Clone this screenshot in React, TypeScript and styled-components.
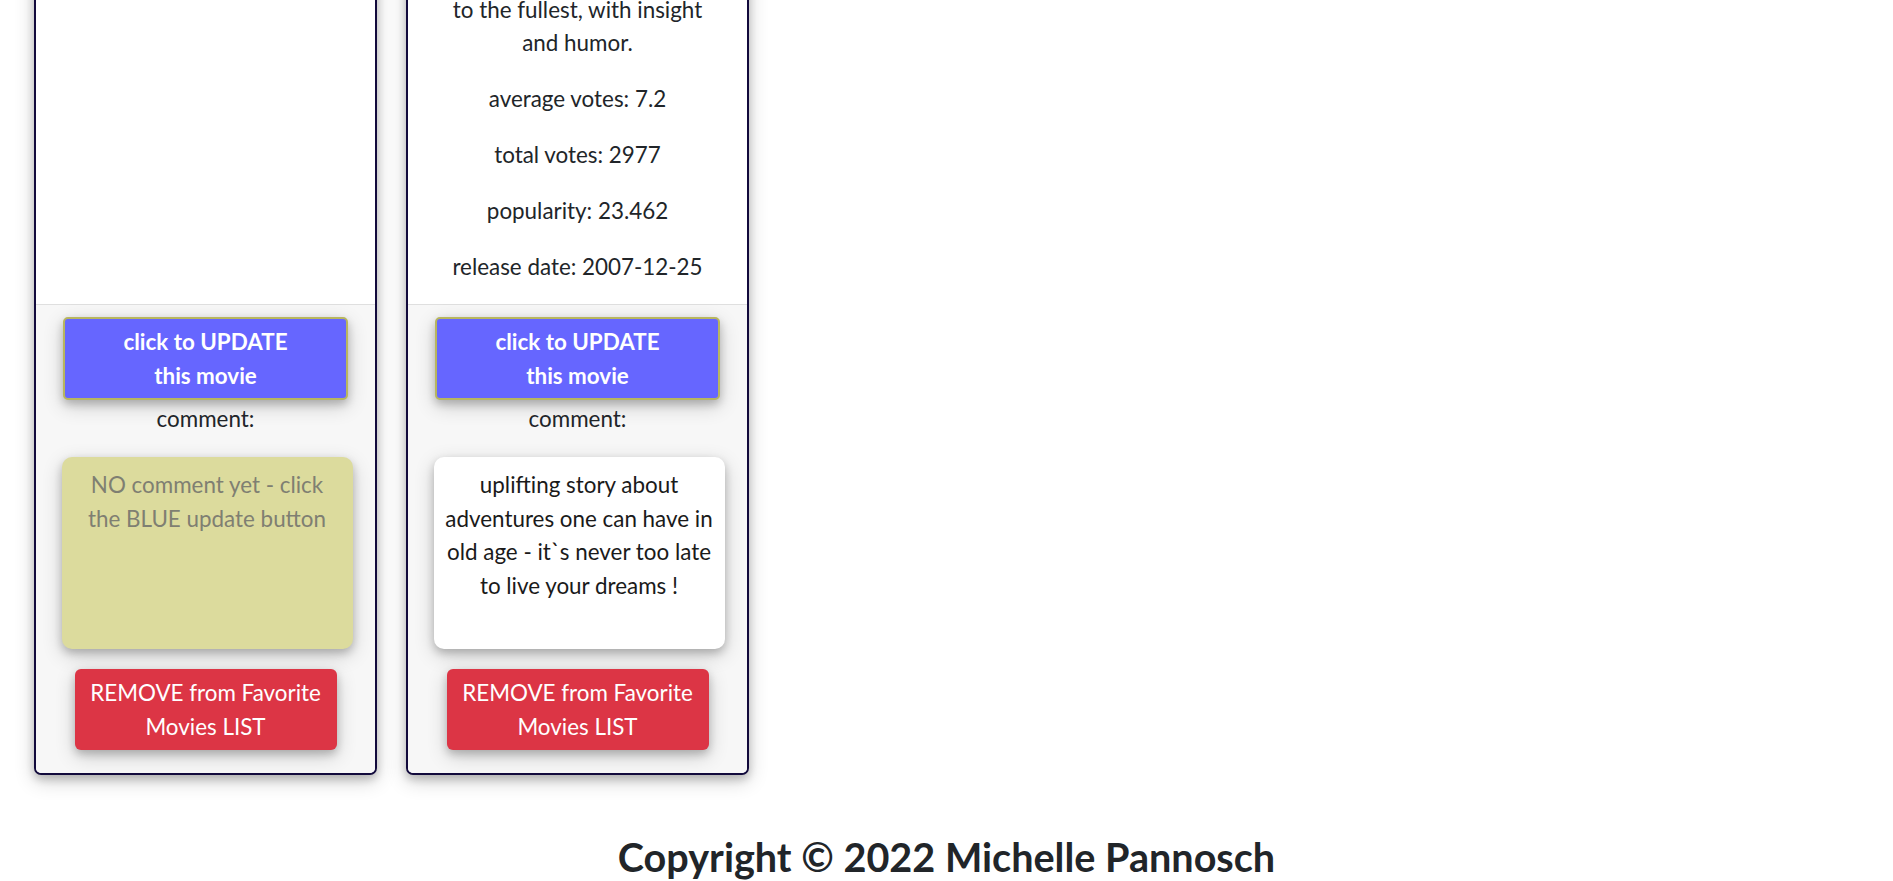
import React from "react";
import styled, { createGlobalStyle } from "styled-components";

const GlobalStyle = createGlobalStyle`
  html, body { margin: 0; padding: 0; background: #ffffff; }
  body {
    font-family: Lato, "Open Sans", "Noto Sans", sans-serif;
    font-size: 22.4px;
    color: #212529;
  }
  * { box-sizing: border-box; }
`;

const Viewport = styled.div`
  height: 100vh;
  overflow: hidden;
  display: flex;
  flex-direction: column;
  justify-content: flex-end;
`;

const CardRow = styled.div`
  display: flex;
  align-items: stretch;
  gap: 29px;
  padding-left: 34px;
  margin-bottom: 58px;
  flex-shrink: 0;
`;

const Card = styled.div`
  width: 343px;
  display: flex;
  flex-direction: column;
  background: #ffffff;
  border: 2px solid #120a3c;
  border-radius: 7px;
  overflow: hidden;
  box-shadow: 0 4px 8px 0 rgba(0, 0, 0, 0.2), 0 6px 20px 0 rgba(0, 0, 0, 0.19);
`;

const CardBody = styled.div`
  flex: 1;
  padding: 22px 29px 20px;
  text-align: center;
`;

const CardTitle = styled.h5`
  margin: 0 0 22px;
  font-size: 28px;
  font-weight: 600;
  line-height: 1.2;
`;

const Text = styled.p`
  margin: 0 0 22.4px;
  line-height: 33.6px;
  &:last-child { margin-bottom: 0; }
`;

const CardFooter = styled.div`
  display: flex;
  flex-direction: column;
  align-items: center;
  background: #f7f7f7;
  border-top: 1px solid #dfdfdf;
  padding: 12px 0 23px;
`;

const UpdateButton = styled.button`
  width: 285px;
  padding: 5.5px 0;
  border: 2px solid #b8b65f;
  border-radius: 5px;
  background: #6666ff;
  color: #ffffff;
  font-family: inherit;
  font-size: 22.4px;
  font-weight: 700;
  line-height: 34px;
  box-shadow: 0 4px 8px 0 rgba(0, 0, 0, 0.2), 0 6px 20px 0 rgba(0, 0, 0, 0.19);
  cursor: pointer;
`;

const CommentLabel = styled.div`
  margin: 2px 0 21px;
  line-height: 34px;
`;

const CommentBox = styled.div<{ $empty?: boolean }>`
  width: 291px;
  height: 192px;
  margin-left: 3px;
  padding: ${(p) => (p.$empty ? "11px 16px" : "11px 8px")};
  border-radius: 10px;
  text-align: center;
  line-height: 33.6px;
  background: ${(p) => (p.$empty ? "#dcdb9d" : "#ffffff")};
  color: ${(p) => (p.$empty ? "#7f7f72" : "#1a1a1a")};
  box-shadow: 0 4px 8px 0 rgba(0, 0, 0, 0.2), 0 6px 20px 0 rgba(0, 0, 0, 0.19);
`;

const RemoveButton = styled.button`
  margin-top: 20px;
  width: 262px;
  padding: 6.5px 6px;
  border: 0;
  border-radius: 6px;
  background: #dc3545;
  color: #ffffff;
  font-family: inherit;
  font-size: 22.4px;
  font-weight: 400;
  line-height: 34px;
  box-shadow: 0 4px 8px 0 rgba(0, 0, 0, 0.2), 0 6px 20px 0 rgba(0, 0, 0, 0.19);
  cursor: pointer;
`;

const Copyright = styled.h3`
  margin: 0;
  text-align: center;
  font-size: 39.6px;
  font-weight: 700;
  line-height: 48px;
  color: #212529;
  flex-shrink: 0;
`;

type Movie = {
  title?: string;
  overview?: string;
  stats?: string[];
  comment?: string;
};

const movies: Movie[] = [
  {},
  {
    title: "The Bucket List",
    overview:
      "Corporate billionaire Edward Cole and working class mechanic Carter Chambers are worlds apart. At a crossroads in their lives, they share a hospital room and discover they have two things in common: a desire to spend the time they have left doing everything they ever wanted to do and an unrealized need to come to terms with who they are. Together they embark on the road trip of a lifetime, becoming friends along the way and learning to live life to the fullest, with insight and humor.",
    stats: [
      "average votes: 7.2",
      "total votes: 2977",
      "popularity: 23.462",
      "release date: 2007-12-25",
    ],
    comment:
      "uplifting story about adventures one can have in old age - it`s never too late to live your dreams !",
  },
];

function MovieCard({ movie }: { movie: Movie }) {
  return (
    <Card>
      <CardBody>
        {movie.title && <CardTitle>{movie.title}</CardTitle>}
        {movie.overview && <Text>{movie.overview}</Text>}
        {movie.stats?.map((s) => (
          <Text key={s}>{s}</Text>
        ))}
      </CardBody>
      <CardFooter>
        <UpdateButton>
          click to UPDATE
          <br />
          this movie
        </UpdateButton>
        <CommentLabel>comment:</CommentLabel>
        <CommentBox $empty={!movie.comment}>
          {movie.comment ?? "NO comment yet - click the BLUE update button"}
        </CommentBox>
        <RemoveButton>REMOVE from Favorite Movies LIST</RemoveButton>
      </CardFooter>
    </Card>
  );
}

export default function App() {
  return (
    <>
      <GlobalStyle />
      <Viewport>
        <CardRow>
          {movies.map((m, i) => (
            <MovieCard key={i} movie={m} />
          ))}
        </CardRow>
        <Copyright>Copyright © 2022 Michelle Pannosch</Copyright>
      </Viewport>
    </>
  );
}
